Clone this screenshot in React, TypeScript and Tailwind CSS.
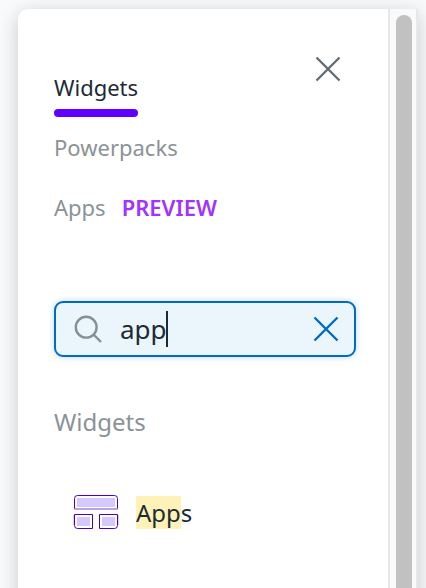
import React from "react";

function CloseIcon({ className, width }: { className: string; width: number }) {
  return (
    <svg viewBox="0 0 26 26" className={className} fill="none" stroke="currentColor" strokeWidth={width}>
      <path d="M1.5 1.5 24.5 24.5M24.5 1.5 1.5 24.5" />
    </svg>
  );
}

function SearchIcon() {
  return (
    <svg viewBox="0 0 28 28" className="h-7 w-7 text-[#829097]" fill="none" stroke="currentColor" strokeWidth="2.4">
      <circle cx="12.2" cy="12.2" r="10.4" />
      <path d="M19.5 19.5 27 27" />
    </svg>
  );
}

function AppsIcon() {
  return (
    <svg viewBox="0 0 46 36" className="h-9 w-[46px]" fill="none">
      <path d="M1.5 15V4.5a3 3 0 0 1 3-3h37a3 3 0 0 1 3 3V15" stroke="#4a00c8" />
      <path d="M1 15h44" stroke="#a282e4" strokeWidth="1.3" />
      <path d="M4 4h38v9H4z" fill="#d4c8ff" />
      <path d="M1.5 20.5h18v14H4.5a3 3 0 0 1-3-3z" stroke="#4a00c8" />
      <path d="M4 23h13v9H4z" fill="#d4c8ff" />
      <path d="M26.5 20.5h18v11a3 3 0 0 1-3 3h-15z" stroke="#4a00c8" />
      <path d="M29 23h13v9H29z" fill="#d4c8ff" />
      <path d="M.5 21v10M45.5 21v10" stroke="#d4c8ff" />
    </svg>
  );
}

export default function App() {
  return (
    <div className="h-[588px] w-[426px] overflow-hidden bg-[#f9fafb] pt-[9px] pl-[18px] font-['Noto_Sans',sans-serif] text-[#1c2b34]">
      <div className="flex h-[640px] w-[400px] overflow-hidden rounded-tl-[10px] bg-white shadow-[0_4px_20px_rgba(0,0,0,0.2)]">
        <main className="w-[370px] pl-9">
          <div className="flex h-[292px] justify-between pr-[47px]">
            <nav className="pt-[63px] text-[22px] leading-[30px] text-[#8a9397]">
              <div className="h-[60px] w-[84px] text-[#1c2b34]">
                Widgets
                <div className="mt-[7px] h-2 rounded-full bg-[#6200ff]" />
              </div>
              <div className="h-[60px]">Powerpacks</div>
              <div className="flex gap-4">
                <span>Apps</span>
                <span className="font-semibold text-[#a033ff]">PREVIEW</span>
              </div>
            </nav>
            <button className="mt-[47px] h-[26px] w-[26px] text-[#636e75]" aria-label="Close">
              <CloseIcon className="h-[26px] w-[26px]" width={2.4} />
            </button>
          </div>
          <div className="flex h-14 w-[302px] items-center rounded-[9px] border-2 border-[#006bc2] bg-[#eaf5fc] pr-[15px] pl-[18px] shadow-[0_0_6px_rgba(0,107,194,0.25)]">
            <SearchIcon />
            <span className="ml-[18px] text-[26px] leading-9">app</span>
            <span className="-ml-px h-9 w-0.5 bg-[#1c2b34]" />
            <CloseIcon className="ml-auto h-[26px] w-[26px] text-[#006bc2]" width={2.4} />
          </div>
          <h2 className="mt-[48px] text-[24px] leading-[34px] text-[#8a9397]">Widgets</h2>
          <div className="mt-[55px] flex h-9 items-center pl-[19px]">
            <AppsIcon />
            <div className="ml-[17px] pt-0.5 text-[24px] leading-[34px]">
              <mark className="bg-[#fff2b8] text-inherit">App</mark>s
            </div>
          </div>
        </main>
        <aside className="w-[30px] border-x-2 border-[#e8e8e8] bg-[#fafafa] px-1.5 pt-1.5">
          <div className="h-full w-4 rounded-full bg-[#c1c1c1]" />
        </aside>
      </div>
    </div>
  );
}
